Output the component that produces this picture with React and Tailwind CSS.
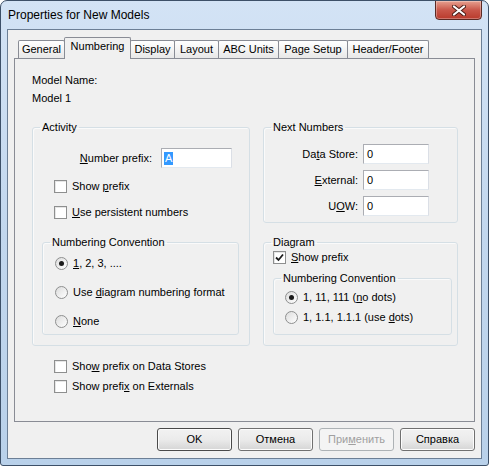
import { useState } from 'react';

const FONT = { fontFamily: '"Liberation Sans", Arial, sans-serif' };

function Check({ checked, children }) {
  return (
    <div className="flex items-center h-[13px] gap-[5px]">
      <span className="w-[13px] h-[13px] border border-[#8e8f8f] bg-white flex items-center justify-center shadow-[inset_1px_1px_0_#e6e6e6]">
        {checked && (
          <svg width="9" height="9" viewBox="0 0 9 9">
            <path d="M1 4.5 L3.5 7 L8 1.5" fill="none" stroke="#1c1c1c" strokeWidth="1.8" />
          </svg>
        )}
      </span>
      <span className="leading-[13px]">{children}</span>
    </div>
  );
}

function Radio({ checked, children }) {
  return (
    <div className="flex items-center h-[13px] gap-[5px]">
      <span className="w-[13px] h-[13px] rounded-full border border-[#8e8f8f] bg-gradient-to-br from-[#dcdcdc] to-white flex items-center justify-center">
        {checked && <span className="w-[5px] h-[5px] rounded-full bg-[#1a1a1a]" />}
      </span>
      <span className="leading-[13px]">{children}</span>
    </div>
  );
}

function Group({ title, className, children }) {
  return (
    <fieldset
      className={
        'border border-[#d5dfe5] rounded-[3px] shadow-[inset_1px_1px_0_#fafafa] ' + (className || '')
      }
    >
      <legend className="ml-[7px] px-[2px] leading-[13px]">{title}</legend>
      {children}
    </fieldset>
  );
}

function Field({ value, selected }) {
  return (
    <div className="h-[20px] bg-white border border-t-[#abadb3] border-l-[#abadb3] border-r-[#dbdfe6] border-b-[#e3e9ef] flex items-center pl-[2px]">
      {selected ? (
        <span className="bg-[#3399ff] text-white leading-[13px] px-px">{value}</span>
      ) : (
        <span className="leading-[13px] pl-px">{value}</span>
      )}
    </div>
  );
}

function Btn({ children, disabled, primary }) {
  let cls =
    'w-[75px] h-[23px] rounded-[3px] border flex items-center justify-center leading-[13px] ';
  if (disabled) {
    cls += 'border-[#adb2b5] bg-[#f4f4f4] text-[#a0a0a0]';
  } else {
    cls +=
      (primary ? 'border-[#4a4a4a] ' : 'border-[#707070] ') +
      'bg-gradient-to-b from-[#f2f2f2] via-[#ebebeb] to-[#d5d5d5] shadow-[inset_0_0_0_1px_#fcfcfc]';
  }
  return <div className={cls}>{children}</div>;
}

const tabs = [
  ['General', 47],
  ['Numbering', 67],
  ['Display', 45],
  ['Layout', 45],
  ['ABC Units', 61],
  ['Page Setup', 70],
  ['Header/Footer', 82],
];

export default function App() {
  const [active] = useState('Numbering');

  return (
    <div className="w-[489px] h-[466px] bg-white text-[11px] text-black" style={FONT}>
      <div className="w-full h-full flex flex-col rounded-t-[7px] rounded-b-[3px] border border-[#3d5068] bg-gradient-to-b from-[#d3e3f5] via-[#c2d7ee] to-[#b9d1ea] overflow-hidden">
        {/* title bar */}
        <div className="h-[28px] flex items-start justify-between pl-[7px] pr-[6px]">
          <div className="pt-[7px] text-[12px] leading-[15px] text-black">
            Properties for New Models
          </div>
          <div className="-mt-px w-[47px] h-[20px] rounded-b-[4px] border border-[#5b2a24] bg-gradient-to-b from-[#e6a090] via-[#c9574a] to-[#b93a2c] shadow-[inset_0_0_0_1px_rgba(255,255,255,0.3)] flex items-center justify-center">
            <svg width="14" height="11" viewBox="0 0 14 11">
              <path d="M2 1.5 L12 9.5 M12 1.5 L2 9.5" stroke="#4a1d17" strokeWidth="4" strokeLinecap="round" />
              <path d="M2 1.5 L12 9.5 M12 1.5 L2 9.5" stroke="#ffffff" strokeWidth="2.2" strokeLinecap="round" />
            </svg>
          </div>
        </div>

        {/* client area */}
        <div className="mx-[6px] border border-[#6c7f96] bg-[#f0f0f0] h-[430px] flex flex-col pl-[6px] pr-[6px]">
          {/* tabs */}
          <div className="mt-[7px] h-[21px] flex items-end pl-[5px] relative z-10">
            {tabs.map(([name, w]) => {
              const on = name === active;
              return (
                <div
                  key={name}
                  style={{ width: w }}
                  className={
                    '-ml-px border border-b-0 border-[#898c95] rounded-t-[2px] flex justify-center ' +
                    (on
                      ? 'h-[22px] -mb-px bg-[#f0f0f0] pt-[2px] z-10'
                      : 'h-[18px] bg-gradient-to-b from-white to-[#e8e8e8] pt-[2px]')
                  }
                >
                  <span className="leading-[13px]">{name}</span>
                </div>
              );
            })}
          </div>

          {/* tab panel */}
          <div className="h-[364px] border border-[#898c95] pl-[17px] pt-[15px] flex flex-col">
            <div className="leading-[13px]">Model Name:</div>
            <div className="leading-[13px] mt-[5px]">Model 1</div>

            <div className="mt-[16px] flex gap-[13px] items-start">
              {/* left column */}
              <Group title="Activity" className="w-[218px] pt-[14px] pb-[10px]">
                <div className="flex items-center justify-end pr-[17px] gap-[9px]">
                  <span className="leading-[13px]">
                    <u className="underline-offset-[1px]">N</u>umber prefix:
                  </span>
                  <div className="w-[71px]">
                    <Field value="A" selected />
                  </div>
                </div>
                <div className="pl-[21px] mt-[12px] flex flex-col gap-[13px]">
                  <Check>
                    Show <u className="underline-offset-[1px]">p</u>refix
                  </Check>
                  <Check>
                    <u className="underline-offset-[1px]">U</u>se persistent numbers
                  </Check>
                </div>
                <Group title="Numbering Convention" className="mt-[17px] ml-[9px] mr-[10px] pt-[8px] pb-[6px]">
                  <div className="pl-[12px] flex flex-col gap-[16px]">
                    <Radio checked>
                      <u className="underline-offset-[1px]">1</u>, 2, 3, ....
                    </Radio>
                    <Radio>
                      Use <u className="underline-offset-[1px]">d</u>iagram numbering format
                    </Radio>
                    <Radio>
                      <u className="underline-offset-[1px]">N</u>one
                    </Radio>
                  </div>
                </Group>
              </Group>

              {/* right column */}
              <div className="w-[195px] flex flex-col gap-[13px]">
                <Group title="Next Numbers" className="pt-[10px] pb-[6px]">
                  <div className="flex flex-col gap-[6px] pr-[28px]">
                    {[
                      [<>Da<u className="underline-offset-[1px]">t</u>a Store:</>, 'ds'],
                      [<><u className="underline-offset-[1px]">E</u>xternal:</>, 'ex'],
                      [<>U<u className="underline-offset-[1px]">O</u>W:</>, 'uow'],
                    ].map(([label, k]) => (
                      <div key={k} className="flex items-center justify-end gap-[5px]">
                        <span className="leading-[13px]">{label}</span>
                        <div className="w-[66px]">
                          <Field value="0" />
                        </div>
                      </div>
                    ))}
                  </div>
                </Group>

                <Group title="Diagram" className="pt-[2px] pb-[10px]">
                  <div className="pl-[9px]">
                    <Check checked>
                      <u className="underline-offset-[1px]">S</u>how prefix
                    </Check>
                  </div>
                  <Group title="Numbering Convention" className="mt-[8px] ml-[9px] mr-[5px] pt-[6px] pb-[10px]">
                    <div className="pl-[11px] flex flex-col gap-[7px]">
                      <Radio checked>
                        1, 11, 111 (<u className="underline-offset-[1px]">n</u>o dots)
                      </Radio>
                      <Radio>
                        1, 1.1, 1.1.1 (use <u className="underline-offset-[1px]">d</u>ots)
                      </Radio>
                    </div>
                  </Group>
                </Group>
              </div>
            </div>

            <div className="pl-[22px] mt-[14px] flex flex-col gap-[7px]">
              <Check>
                Sho<u className="underline-offset-[1px]">w</u> prefix on Data Stores
              </Check>
              <Check>
                Show prefi<u className="underline-offset-[1px]">x</u> on Externals
              </Check>
            </div>
          </div>

          {/* buttons */}
          <div className="mt-[6px] flex justify-end gap-[6px]">
            <Btn primary>OK</Btn>
            <Btn>Отмена</Btn>
            <Btn disabled>
              При<u className="underline-offset-[1px]">м</u>енить
            </Btn>
            <Btn>Справка</Btn>
          </div>
        </div>
      </div>
    </div>
  );
}
